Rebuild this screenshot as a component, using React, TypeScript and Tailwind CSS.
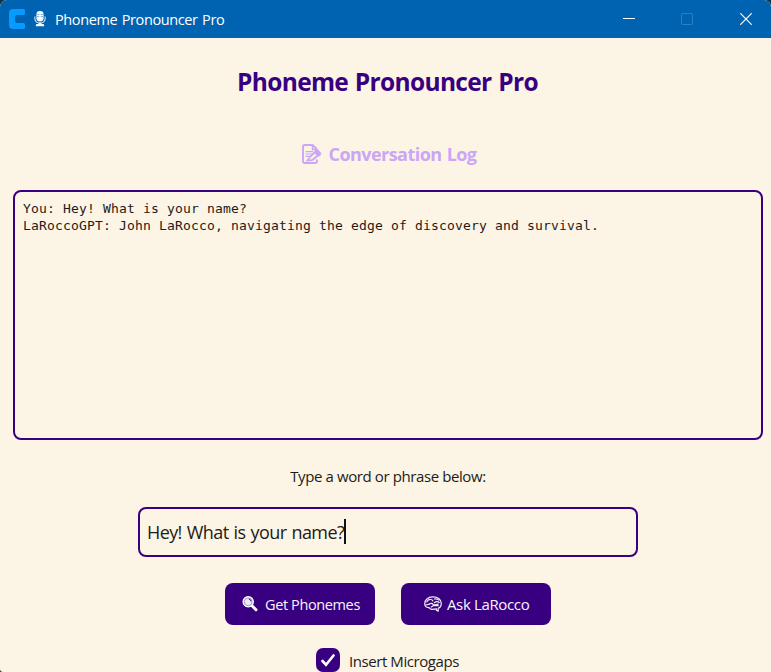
import type { ReactNode } from "react";

function MicIcon() {
  return (
    <svg width="12" height="16" viewBox="0 0 12 16" fill="none">
      <rect x="2.4" y="0" width="7.2" height="10.5" rx="3.4" fill="#f4f8fc" />
      <path d="M3 3.5h2.3M6.7 3.5H9M3 5.5h2.3M6.7 5.5H9" stroke="#6ea6d4" strokeWidth="0.8" />
      <path d="M.9 5.5v2.2a5.1 4.5 0 0 0 10.2 0V5.5" stroke="#d5e5f3" strokeWidth="1.1" />
      <path d="M4.6 11.500h2.800v1.600h1.800c.7 0 1 .8 1 2.100H1.800c0-1.300.3-2.100 1-2.100h1.800z" fill="#f4f8fc" />
    </svg>
  );
}

function MemoIcon() {
  return (
    <svg width="20" height="20" viewBox="0 0 20 20" fill="none" stroke="#cba6f7">
      <path d="M15 15.500V17.500q0 1.500-1.500 1.500H2.500Q1 19 1 17.500V2.500Q1 1 2.500 1H10.500L15 5.300" strokeWidth="1.900" />
      <path d="M10.500 1.200V5.500H14" strokeWidth="1.500" />
      <path d="M3.500 7.700h7.500M3.500 10h6.500M3.500 12.300h4" strokeWidth="1.200" />
      <path d="M13.800 4.800 15.500 5l4 4.300-1.300 2.500-2.200 1-4.300-4.500z" fill="#cba6f7" stroke="none" />
      <path d="M12.800 8.200 7.500 13.400M16 11.200l-5.800 5" strokeWidth="1.900" />
      <path d="M7.800 13.400l-2.500 3.200 5.100-.4" strokeWidth="1.700" />
    </svg>
  );
}

function SearchIcon() {
  return (
    <svg width="16" height="16" viewBox="0 0 16 16" fill="none">
      <path d="M9.500 9.300l4.500 4.500" stroke="white" strokeWidth="3" strokeLinecap="round" />
      <circle cx="6.200" cy="5.800" r="5.200" fill="#eeeaf5" stroke="white" strokeWidth="1.100" />
      <circle cx="6.200" cy="5.800" r="3.900" stroke="#8a75b8" strokeWidth="0.700" />
      <path d="M6.800 3q2 .3 2.300 2.300" stroke="#35007b" strokeWidth="1" />
    </svg>
  );
}

function BrainIcon() {
  return (
    <svg width="19" height="16" viewBox="0 0 19 16" fill="none" stroke="#f3eff8" strokeWidth="1.200" strokeLinecap="round" strokeLinejoin="round">
      <path d="M5 11.600C2.500 12 .5 10 .8 7.800.6 4.200 3.900 1 8.700.9c4.700-.2 8.400 2.400 8.500 6 .2 2.700-1 4.700-3 5.400v2.900l-1.800-1v-1.400l-4.500.5q-2 .1-2.900-1.700z" />
      <path d="M2.800 6q1.200-2.800 4-2.500 1.500.2 2 1.500M10.300 3q3-.6 4.500 1.200M10.300 6.700q2.500-2 5-.3M5.100 8.300q2.200-1.700 4.200.2 2 .8 5-.5M1.800 9l3-.7M7.200 11l2-1.300h5" />
    </svg>
  );
}

function ActionButton({ className, children }: { className: string; children: ReactNode }) {
  return (
    <button className={`flex h-[42px] w-[150px] items-center rounded-lg bg-[#380080] text-[15px] text-[#f8f4fa] ${className}`}>
      {children}
    </button>
  );
}

export default function App() {
  return (
    <div className="h-[672px] w-[771px] overflow-hidden bg-[#12323f] font-['Open_Sans','Noto_Sans',sans-serif] text-[#1d1b20]">
      <div className="h-full overflow-hidden rounded-t-[7px] rounded-bl-[3px] bg-[#fcf4e4]">
        <header className="flex h-[38px] items-center bg-[#0063b1] text-white">
          <svg className="ml-[9px]" width="17" height="20" viewBox="0 0 17 20">
            <path d="M4 0h11l1 1v4l-1 1H8Q6 6 6 8v4q0 2 2 2h7l1 1v4l-1 1H4q-4 0-4-4V4q0-4 4-4z" fill="#079bff" />
          </svg>
          <span className="ml-2"><MicIcon /></span>
          <span className="ml-[9px] pt-0.5 text-[14.5px] leading-5 tracking-[-0.38px] [word-spacing:1px] whitespace-nowrap">Phoneme Pronouncer Pro</span>
          <div className="mr-[19px] ml-auto flex items-center">
            <svg className="mr-[46px]" width="12" height="12" viewBox="0 0 12 12"><path d="M0 5.500h12" stroke="white" /></svg>
            <svg className="mr-[47px]" width="12" height="12" viewBox="0 0 12 12"><rect x=".5" y=".5" width="11" height="11" rx="1" fill="none" stroke="#2b80c3" /></svg>
            <svg width="12" height="12" viewBox="0 0 12 12"><path d="M.3.300l11.400 11.400M11.700.300.300 11.700" stroke="white" strokeWidth="1.200" /></svg>
          </div>
        </header>

        <main className="flex flex-col items-center pl-[5px]">
          <h1 className="mt-[27px] mr-px text-[24.5px] leading-[34px] font-bold tracking-[-0.67px] [word-spacing:1px] whitespace-nowrap text-[#380080]">Phoneme Pronouncer Pro</h1>
          <div className="mt-[43px] ml-[2px] flex h-6 items-center gap-[7px] text-[18px] font-bold tracking-[-0.55px] [word-spacing:1px] whitespace-nowrap text-[#cba6f7]">
            <MemoIcon />
            <h2 className="pt-px">Conversation Log</h2>
          </div>
          <section className="mt-6 h-[250px] w-[750px] rounded-lg border-2 border-[#380080] px-2 pt-2 font-['DejaVu_Sans_Mono',monospace] text-[13px] leading-[17px] tracking-[0.174px]">
            <p>You: Hey! What is your name?</p>
            <p>LaRoccoGPT: John LaRocco, navigating the edge of discovery and survival.</p>
          </section>
          <label htmlFor="phrase" className="mt-[26px] text-[15px] leading-5 tracking-[-0.4px]">Type a word or phrase below:</label>
          <div id="phrase" className="mt-[21px] flex h-[50px] w-[500px] items-center rounded-lg border-2 border-[#380080] pl-[7px] text-[18px]">
            <span className="tracking-[-0.6px] [word-spacing:1px] whitespace-nowrap">Hey! What is your name?</span>
            <span className="mb-px h-[25px] w-0.5 bg-[#111]" />
          </div>
          <div className="mt-[26px] flex gap-[26px]">
            <ActionButton className="gap-[7px] pl-[17px]">
              <SearchIcon />
              <span className="pt-0.5 text-[14.5px] tracking-[-0.38px] whitespace-nowrap">Get Phonemes</span>
            </ActionButton>
            <ActionButton className="gap-1 pl-[23px]">
              <BrainIcon />
              <span className="tracking-[-0.36px] whitespace-nowrap">Ask LaRocco</span>
            </ActionButton>
          </div>
          <label className="mt-[23px] mr-px flex h-6 items-center gap-[9px] text-[15px]">
            <span className="flex size-6 items-center justify-center rounded-[7px] bg-[#380080]">
              <svg width="14" height="13" viewBox="0 0 14 13"><path d="M1.500 7 5 10.800 12.500 1.500" fill="none" stroke="white" strokeWidth="2.600" strokeLinecap="round" /></svg>
            </span>
            <span className="pt-[3px] tracking-[-0.43px] whitespace-nowrap">Insert Microgaps</span>
          </label>
        </main>
      </div>
    </div>
  );
}
